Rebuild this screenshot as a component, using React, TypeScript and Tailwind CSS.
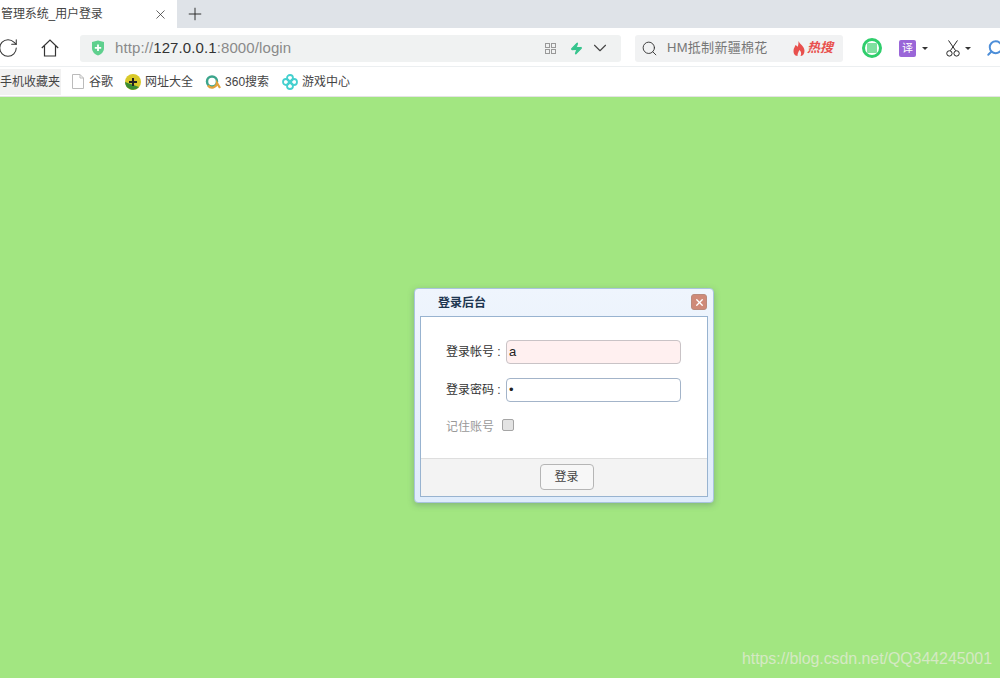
import { ChevronDown, Plus, RotateCw, Search, X, Zap } from "lucide-react";

const cjk = "font-['Liberation_Sans','Noto_Sans_CJK_SC',sans-serif]";

function TabStrip() {
  return (
    <div className="flex h-[28px] bg-[#dfe3e8]">
      <div className="flex w-[177px] items-center justify-between bg-white pl-[1px] pr-[9px]">
        <span className="text-[12px] tracking-[-0.1px] text-[#444]">管理系统_用户登录</span>
        <X size={15} strokeWidth={1.2} className="text-[#333]" />
      </div>
      <div className="ml-[8px] flex items-center">
        <Plus size={20} strokeWidth={1.1} className="text-[#222]" />
      </div>
    </div>
  );
}

function Toolbar() {
  return (
    <div className="flex h-[39px] items-center border-b border-[#eceff1] bg-white pt-[2px]">
      <div className="ml-[-3px] flex w-[22px] shrink-0 items-center">
        <RotateCw size={22} strokeWidth={1.1} className="text-[#333]" />
      </div>
      <svg width="18" height="18" viewBox="0 0 18 18" className="ml-[22px] shrink-0">
        <path d="M0.8 9 L9 1 L17.2 9 M3.5 7 V17 H14.5 V7" fill="none" stroke="#333" strokeWidth="1.2" />
      </svg>
      <div className="ml-[21px] flex h-[27px] w-[541px] shrink-0 items-center rounded-[3px] bg-[#f0f2f2] pl-[11px] pr-[10px]">
        <svg width="14" height="16" viewBox="0 0 14 16">
          <path d="M1 2 L7 0.5 L13 2 V8 C13 12 10 14.5 7 15.5 C4 14.5 1 12 1 8 Z" fill="#5fd08e" />
          <path d="M7 4.5 V11 M3.8 7.8 H10.2" stroke="#fff" strokeWidth="1.8" />
        </svg>
        <span className="ml-[10px] text-[15px] tracking-[0.1px] text-[#8a8a8a]">
          http://<span className="text-[#333]">127.0.0.1</span>:8000/login
        </span>
        <div className="ml-auto grid grid-cols-2 gap-[1px]">
          <div className="h-[5px] w-[5px] border border-[#999]" />
          <div className="h-[5px] w-[5px] border border-[#999]" />
          <div className="h-[5px] w-[5px] border border-[#999]" />
          <div className="h-[5px] w-[5px] border border-[#999]" />
        </div>
        <Zap size={13} className="ml-[14px] fill-[#35c48d] text-[#35c48d]" />
        <ChevronDown size={22} strokeWidth={1.2} className="ml-[6px] text-[#444]" />
      </div>
      <div className="ml-[14px] flex h-[27px] w-[208px] shrink-0 items-center rounded-[3px] bg-[#f1f2f3] pl-[6px] pr-[10px]">
        <Search size={17} strokeWidth={1.3} className="text-[#333]" />
        <span className="ml-[9px] text-[13px] tracking-[0.3px] text-[#777]">HM抵制新疆棉花</span>
        <svg width="14" height="15" viewBox="0 0 13 15" className="ml-auto">
          <path d="M6 0 C7 3 12 5 12 10 C12 13 10 15 8 15 C9.5 12 8 10 7 9 C6 11 5 12 5 15 C2 15 1 12 1 10 C1 7 2.5 6 3 4 C4 5 5 5 5 6 C6 4 6 2 6 0 Z" fill="#e8504d" />
        </svg>
        <span className="ml-[1px] text-[13px] font-bold italic text-[#e8504d]">热搜</span>
      </div>
      <div className="ml-[19px] flex h-[20px] w-[20px] shrink-0 items-center justify-center rounded-full border-[3px] border-[#2fce6c] bg-white">
        <div className="h-[10px] w-[10px] rounded-[1px] bg-[#7fe0a0]" />
      </div>
      <div className="ml-[17px] flex h-[17px] w-[17px] shrink-0 items-center justify-center rounded-[2px] bg-[#9a66d8] text-[11px] text-white">
        译
      </div>
      <div className="ml-[6px] h-0 w-0 shrink-0 border-x-[3px] border-t-[3px] border-x-transparent border-t-[#333]" />
      <svg width="16" height="17" viewBox="0 0 16 19" className="ml-[17px] shrink-0">
        <g fill="none" stroke="#222" strokeWidth="1.1">
          <path d="M3 0.5 L11 12 M13 0.5 L5 12" />
          <circle cx="4" cy="15" r="3" />
          <circle cx="12" cy="15" r="3" />
        </g>
      </svg>
      <div className="ml-[4px] h-0 w-0 shrink-0 border-x-[3px] border-t-[3px] border-x-transparent border-t-[#333]" />
      <Search size={18} strokeWidth={2.6} className="ml-[15px] shrink-0 -scale-x-100 text-[#4d8ed8]" />
    </div>
  );
}

function Bookmarks() {
  return (
    <div className="flex h-[30px] items-center border-b border-[#e4e4e4] bg-white text-[12px] text-[#444]">
      <div className="flex h-[26px] w-[61px] items-center justify-end overflow-hidden bg-[#f1f1f1] pr-[1px]">
        <span className="whitespace-nowrap">手机收藏夹</span>
      </div>
      <svg width="12" height="15" viewBox="0 0 12 15" className="ml-[11px]">
        <path d="M0.5 0.5 H8 L11.5 4 V14.5 H0.5 Z M8 0.5 V4 H11.5" fill="none" stroke="#bbb" />
      </svg>
      <span className="ml-[5px]">谷歌</span>
      <svg width="16" height="16" viewBox="0 0 16 16" className="ml-[12px]">
        <circle cx="8" cy="8" r="8" fill="#d9c92a" />
        <path d="M0 8 A8 8 0 0 0 14 13 Z" fill="#3a8c33" />
        <path d="M8 4 V12 M4 8 H12" stroke="#222" strokeWidth="2" />
      </svg>
      <span className="ml-[4px]">网址大全</span>
      <svg width="16" height="16" viewBox="0 0 16 16" className="ml-[12px]">
        <circle cx="7" cy="7.5" r="5" fill="none" stroke="#3ca58c" strokeWidth="2.5" />
        <path d="M3 11.5 A5 5 0 0 0 12 9 L15 14" fill="none" stroke="#e3a23a" strokeWidth="2.2" />
      </svg>
      <span className="ml-[4px]">360搜索</span>
      <svg width="16" height="16" viewBox="0 0 16 16" className="ml-[13px]">
        <g fill="none" stroke="#45d0cf" strokeWidth="1.8">
          <circle cx="8" cy="4" r="3" />
          <circle cx="8" cy="12" r="3" />
          <circle cx="4" cy="8" r="3" />
          <circle cx="12" cy="8" r="3" />
        </g>
      </svg>
      <span className="ml-[4px]">游戏中心</span>
    </div>
  );
}

function LoginDialog() {
  return (
    <div className="h-fit w-[300px] rounded-[4px] border border-[#a9c4de] bg-gradient-to-b from-[#eff5fd] to-[#dfecfb] px-[5px] pb-[5px] shadow-[0_2px_6px_rgba(90,120,110,0.45)]">
      <div className="flex h-[27px] items-center justify-between pl-[18px] pr-[1px]">
        <span className="text-[12px] font-bold text-[#1d3650]">登录后台</span>
        <div className="mb-[1px] flex h-[16px] w-[16px] items-center justify-center rounded-[3px] border border-[#b98a7c] bg-[#cf8a78]">
          <X size={11} strokeWidth={3} className="text-white" />
        </div>
      </div>
      <div className="border border-[#98b3d0] bg-white">
        <div className="h-[141px] pl-[25px] pt-[23px] text-[12px]">
          <div className="flex h-[24px] items-center">
            <span className="w-[60px] text-[#333]">登录帐号 :</span>
            <div className="flex h-[24px] w-[175px] items-center rounded-[4px] border border-[#c9c3c6] bg-[#fff0f0] pl-[2px] text-[13px] text-[#222]">
              a
            </div>
          </div>
          <div className="mt-[14px] flex h-[24px] items-center">
            <span className="w-[60px] text-[#333]">登录密码 :</span>
            <div className="flex h-[24px] w-[175px] items-center rounded-[4px] border border-[#a3b4c9] bg-white pl-[2px] text-[13px] text-[#222]">
              •
            </div>
          </div>
          <div className="mt-[16px] flex items-center text-[#999]">
            <span className="w-[56px]">记住账号</span>
            <div className="mb-[5px] h-[12px] w-[12px] rounded-[2px] border border-[#a5a5a5] bg-[#e3e3e3]" />
          </div>
        </div>
        <div className="flex h-[38px] justify-center border-t border-[#dedede] bg-[#f3f3f3] pl-[5px] pt-[5px]">
          <div className="flex h-[26px] w-[54px] items-center justify-center rounded-[4px] border border-[#b5b5b5] bg-[#f7f7f7] text-[12px] text-[#444]">
            登录
          </div>
        </div>
      </div>
    </div>
  );
}

export default function App() {
  return (
    <div className={`relative flex h-[678px] w-[1000px] flex-col overflow-hidden ${cjk}`}>
      <TabStrip />
      <Toolbar />
      <Bookmarks />
      <main className="flex flex-1 items-start justify-center bg-[#a2e681] pl-[128px] pt-[191px]">
        <LoginDialog />
      </main>
      <span className="absolute bottom-[7px] right-[8px] text-[16px] tracking-[-0.08px] text-[#d5e9c4] font-['Liberation_Sans',sans-serif]">
        https://blog.csdn.net/QQ344245001
      </span>
    </div>
  );
}
